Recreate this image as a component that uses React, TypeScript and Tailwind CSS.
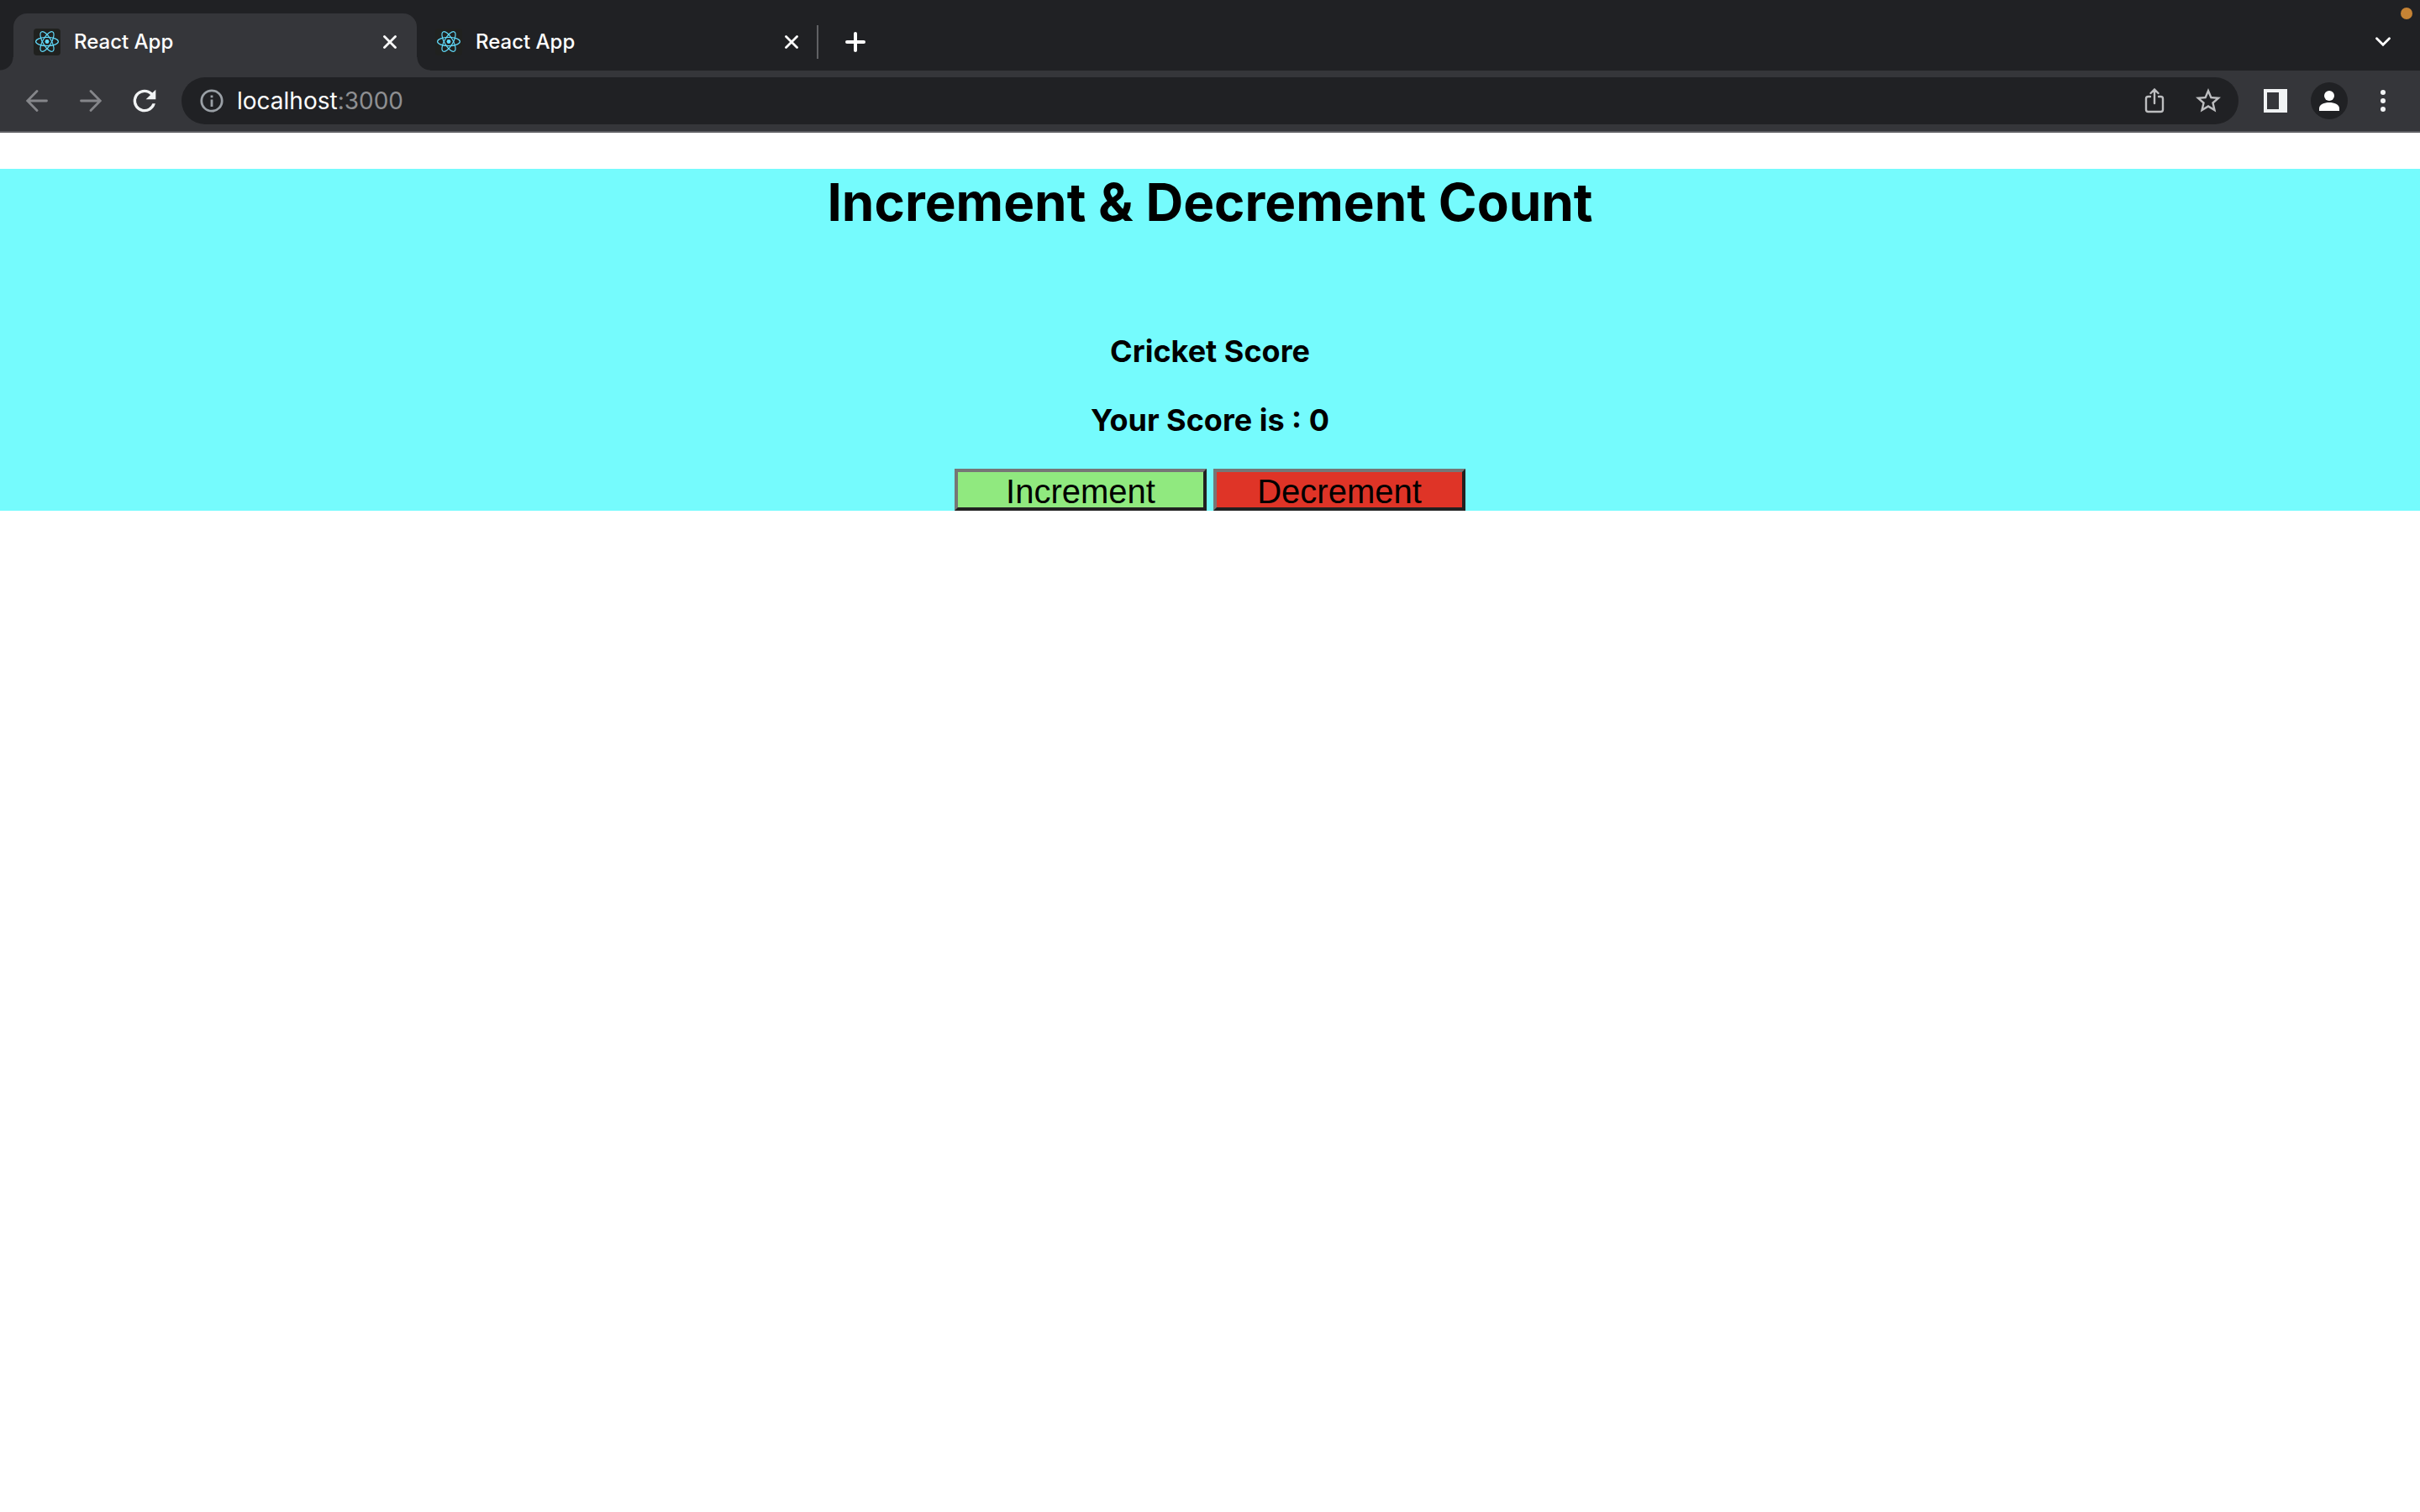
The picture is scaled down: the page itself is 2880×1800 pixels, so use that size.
import { useState } from "react";

function ReactLogo() {
  return (
    <svg viewBox="0 0 32 32" className="size-8 shrink-0 rounded-sm bg-[#20211f]" fill="none" stroke="#61dafb" strokeWidth="1.2" aria-hidden="true">
      <circle cx="16" cy="15.5" r="2.4" fill="#61dafb" stroke="none" />
      <ellipse cx="16" cy="15.5" rx="13.4" ry="5.1" />
      <ellipse cx="16" cy="15.5" rx="13.4" ry="5.1" transform="rotate(60 16 15.5)" />
      <ellipse cx="16" cy="15.5" rx="13.4" ry="5.1" transform="rotate(120 16 15.5)" />
    </svg>
  );
}

function CloseButton() {
  return (
    <button type="button" aria-label="Close tab" className="flex size-8 shrink-0 items-center justify-center rounded-full">
      <svg viewBox="0 0 16 16" className="size-4" fill="none" stroke="#fff" strokeWidth="2.8" strokeLinecap="round" aria-hidden="true">
        <path d="M1.5 1.5l13 13M14.5 1.5l-13 13" />
      </svg>
    </button>
  );
}

function TabStrip() {
  return (
    <div className="relative flex h-[84px] items-end bg-[#202124] pl-4">
      <div className="relative flex h-[68px] w-[480px] items-center rounded-t-2xl bg-[#35363a] pr-4 pl-6">
        <span className="absolute bottom-0 -left-4 size-4 bg-[radial-gradient(circle_at_top_left,transparent_15px,#35363a_16px)]" />
        <span className="absolute -right-4 bottom-0 size-4 bg-[radial-gradient(circle_at_top_right,transparent_15px,#35363a_16px)]" />
        <ReactLogo />
        <span className="ml-4 flex-1 text-2xl font-medium text-white">React App</span>
        <CloseButton />
      </div>
      <div className="flex h-[68px] w-[476px] items-center pr-3.5 pl-[22px]">
        <ReactLogo />
        <span className="ml-4 flex-1 text-2xl font-medium text-white">React App</span>
        <CloseButton />
      </div>
      <div className="flex h-[68px] items-center">
        <span className="h-10 w-0.5 bg-[#606164]" />
        <button type="button" aria-label="New tab" className="ml-5 flex size-12 items-center justify-center">
          <svg viewBox="0 0 24 24" className="size-6" fill="none" stroke="#fff" strokeWidth="4" strokeLinecap="round" aria-hidden="true">
            <path d="M12 2v20M2 12h20" />
          </svg>
        </button>
      </div>
      <button type="button" aria-label="Search tabs" className="mr-3 ml-auto flex h-[68px] w-16 items-center justify-center">
        <svg viewBox="0 0 18 12" className="h-3 w-[18px]" fill="none" stroke="#fff" strokeWidth="2.8" strokeLinecap="round" aria-hidden="true">
          <path d="M1.5 1.8L9 9.3l7.500-7.500" />
        </svg>
      </button>
      <span className="absolute top-[9px] right-[9px] size-3.5 rounded-full bg-[#c68334]" />
    </div>
  );
}

const navButton = "flex h-14 w-16 shrink-0 items-center justify-center";

function Toolbar() {
  return (
    <div className="flex h-[74px] items-center border-b-2 border-[#5d5e62] bg-[#35363a] px-3">
      <button type="button" aria-label="Back" className={navButton}>
        <svg viewBox="0 0 26 26" className="size-[26px]" fill="none" stroke="#85868a" strokeWidth="2.8" strokeLinecap="round" aria-hidden="true">
          <path d="M24.500 13H2M13 1.500L1.700 13 13 24.500" />
        </svg>
      </button>
      <button type="button" aria-label="Forward" className={navButton}>
        <svg viewBox="0 0 26 26" className="size-[26px]" fill="none" stroke="#85868a" strokeWidth="2.8" strokeLinecap="round" aria-hidden="true">
          <path d="M1.500 13H24M13 1.500L24.300 13 13 24.500" />
        </svg>
      </button>
      <button type="button" aria-label="Reload" className={navButton}>
        <svg viewBox="0 0 24 24" className="size-10" fill="#f1f3f4" aria-hidden="true">
          <path d="M17.650 6.350A7.958 7.958 0 0 0 12 4a8 8 0 1 0 7.730 10h-2.080A6 6 0 1 1 12 6c1.660 0 3.140.690 4.220 1.780L13 11h7V4l-2.350 2.350z" />
        </svg>
      </button>
      <div className="mx-3 flex h-14 flex-1 items-center rounded-full bg-[#202124] pr-1 pl-[22px]">
        <svg viewBox="0 0 28 28" className="size-7 shrink-0" fill="none" stroke="#9aa0a6" strokeWidth="2.8" aria-hidden="true">
          <circle cx="14" cy="14" r="12.200" />
          <path d="M14 12.500V21M14 7.500v2.800" />
        </svg>
        <a href="http://localhost:3000" className="ml-4 flex-1 text-[28px] text-[#8e8f92]">
          <span className="text-white">localhost</span>:3000
        </a>
        <button type="button" aria-label="Share this page" className={navButton}>
          <svg viewBox="0 0 24 30" className="h-[30px] w-6" fill="none" stroke="#bdbec0" strokeWidth="2.4" strokeLinecap="round" aria-hidden="true">
            <path d="M7 10H4.500a2.500 2.500 0 0 0-2.500 2.500v13A2.500 2.500 0 0 0 4.500 28h15a2.500 2.500 0 0 0 2.500-2.500v-13a2.500 2.500 0 0 0-2.500-2.500H17M12 18V2M7.500 6L12 1.500 16.500 6" />
          </svg>
        </button>
        <button type="button" aria-label="Bookmark this tab" className={navButton}>
          <svg viewBox="0 0 24 24" className="size-9" fill="#bdbec0" aria-hidden="true">
            <path d="M22 9.240l-7.190-.620L12 2 9.190 8.630 2 9.240l5.460 4.730L5.820 21 12 17.270 18.180 21l-1.630-7.030L22 9.240zM12 15.400l-3.760 2.270 1-4.280-3.320-2.880 4.380-.380L12 6.100l1.710 4.040 4.380.380-3.320 2.880 1 4.280L12 15.400z" />
          </svg>
        </button>
      </div>
      <button type="button" aria-label="Side panel" className={navButton}>
        <svg viewBox="0 0 28 28" className="size-7" fill="#f1f3f4" aria-hidden="true">
          <path fillRule="evenodd" d="M0 0h28v28H0zM4 4v20h14V4z" />
        </svg>
      </button>
      <button type="button" aria-label="Profile" className={navButton}>
        <svg viewBox="0 0 44 44" className="size-11 rounded-full bg-[#202124]" fill="#fff" aria-hidden="true">
          <circle cx="22" cy="16" r="6" />
          <path d="M10 34v-3c0-4.500 6-7 12-7s12 2.500 12 7v3z" />
        </svg>
      </button>
      <button type="button" aria-label="Menu" className={navButton}>
        <svg viewBox="0 0 6 26" className="h-[26px] w-1.5" fill="#f1f3f4" aria-hidden="true">
          <circle cx="3" cy="3" r="3" />
          <circle cx="3" cy="13" r="3" />
          <circle cx="3" cy="23" r="3" />
        </svg>
      </button>
    </div>
  );
}

const scoreButton =
  "h-[50px] w-[300px] border-4 border-t-[#767676] border-r-[#212121] border-b-[#212121] border-l-[#767676] font-['Liberation_Sans',Arial,sans-serif] text-[40px] leading-[46px] text-black";

export default function App() {
  const [score, setScore] = useState(0);
  return (
    <div className="min-h-screen bg-white font-[Inter,sans-serif]">
      <header>
        <TabStrip />
        <Toolbar />
      </header>
      <main className="mt-[43px] bg-[#75fbfd] text-center text-black">
        <h1 className="text-[62px] leading-[80px] font-bold">Increment &amp; Decrement Count</h1>
        <h3 className="mt-[114px] text-4xl leading-[46px] font-bold">Cricket Score</h3>
        <h3 className="mt-9 text-4xl leading-[46px] font-bold">Your Score is : {score}</h3>
        <div className="mt-[35px] flex justify-center gap-2">
          <button type="button" onClick={() => setScore(score + 1)} className={scoreButton + " bg-[#90e97f]"}>
            Increment
          </button>
          <button type="button" onClick={() => setScore(score - 1)} className={scoreButton + " bg-[#df3427]"}>
            Decrement
          </button>
        </div>
      </main>
    </div>
  );
}
